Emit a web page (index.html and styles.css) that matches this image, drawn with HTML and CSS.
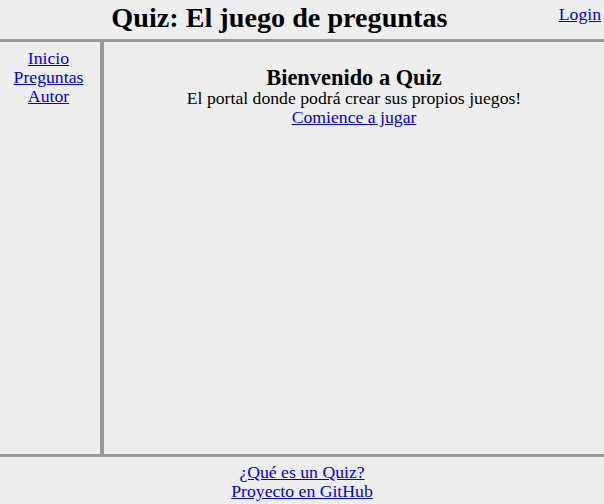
FILE: index.html
```html
<!DOCTYPE html>
<html>
<head>
<meta charset="utf-8">
<link rel="stylesheet" href="styles.css">
</head>
<body>
<div class="page">
  <header class="top">
    <h1 class="title">Quiz: El juego de preguntas</h1>
    <a class="login" href="#">Login</a>
  </header>
  <div class="middle">
    <nav class="nav">
      <a href="#">Inicio</a>
      <a href="#">Preguntas</a>
      <a href="#">Autor</a>
    </nav>
    <main class="main">
      <h2 class="welcome">Bienvenido a Quiz</h2>
      <p class="lead">El portal donde podrá crear sus propios juegos!</p>
      <a href="#">Comience a jugar</a>
    </main>
  </div>
  <footer class="foot">
    <a href="#">¿Qué es un Quiz?</a>
    <a href="#">Proyecto en GitHub</a>
  </footer>
</div>
</body>
</html>
```
FILE: styles.css
```css
html, body {
  margin: 0;
  padding: 0;
  height: 100%;
  background: #eeeeee;
}
body {
  font-family: "Liberation Serif", serif;
  font-size: 17.7px;
  color: #000;
}
a { color: #0000ee; }
.page {
  display: flex;
  flex-direction: column;
  height: 504px;
}
.top {
  height: 39px;
  flex: none;
  border-bottom: 3px solid #999;
  display: flex;
  align-items: flex-start;
}
.title {
  flex: 1;
  text-align: center;
  margin: 3px 0 0;
  font-size: 28.2px;
  line-height: 30px;
  font-weight: bold;
}
.login {
  margin: 5px 3px 0 0;
  line-height: 19px;
}
.middle {
  flex: 1;
  display: flex;
}
.nav {
  width: 97px;
  padding-right: 3px;
  border-right: 4px solid #999;
  display: flex;
  flex-direction: column;
  align-items: center;
  padding-top: 7px;
  line-height: 19px;
}
.main {
  flex: 1;
  display: flex;
  flex-direction: column;
  align-items: center;
  padding-top: 25px;
  line-height: 19px;
}
.welcome {
  margin: 0;
  font-size: 22.4px;
  line-height: 22px;
}
.lead { margin: 0; }
.foot {
  height: 50px;
  flex: none;
  border-top: 3px solid #999;
  display: flex;
  flex-direction: column;
  align-items: center;
  padding-top: 6px;
  box-sizing: border-box;
  line-height: 19px;
}
```
